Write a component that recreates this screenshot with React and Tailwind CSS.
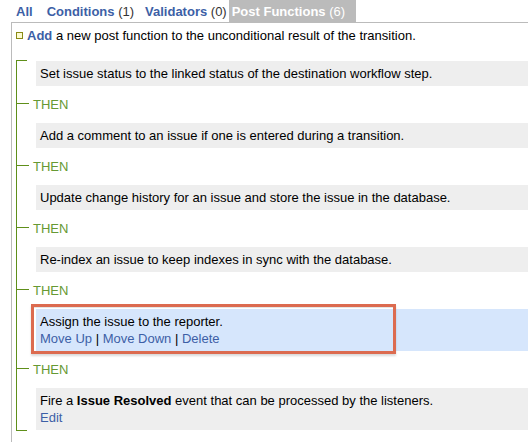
import React from "react";

const G = "bg-[#5f8f1a]";

function Tick() {
  return <div className={`h-px w-[10px] ${G}`} />;
}

function Then() {
  return (
    <div className="flex items-center mt-[9px] mb-[11px] h-[17px]">
      <div className={`h-px w-[12px] ${G}`} />
      <span className="ml-[4px] text-[#669933] leading-[17px] pt-px">THEN</span>
    </div>
  );
}

function Box({ children, blue }) {
  return (
    <div
      className={`ml-[19px] px-[4px] py-[4px] leading-[17px] ${
        blue ? "bg-[#d6e6fc]" : "bg-[#eeeeee]"
      }`}
    >
      {children}
    </div>
  );
}

const link = "text-[#3d5fa6]";

export default function App() {
  return (
    <div
      className="w-[528px] h-[442px] overflow-hidden bg-white text-[13px] text-black"
      style={{ fontFamily: '"Liberation Sans", Arial, sans-serif' }}
    >
      <div className="flex items-end h-[22px] pl-[16px]">
        <span className={`font-bold ${link} leading-[20px] pt-[2px]`}>All</span>
        <span className="ml-[14px] leading-[20px] pt-[2px]">
          <span className={`font-bold ${link}`}>Conditions</span>{" "}
          <span className="text-[#333]">(1)</span>
        </span>
        <span className="ml-[11px] leading-[20px] pt-[2px]">
          <span className={`font-bold ${link}`}>Validators</span>{" "}
          <span className="text-[#333]">(0)</span>
        </span>
        <span className="ml-[2px] pl-[3px] pr-[11px] bg-[#bbbbbb] text-white leading-[20px] pt-[2px]">
          <span className="font-bold">Post Functions</span> (6)
        </span>
      </div>
      <div className="ml-[11px] border-l border-t border-[#bbbbbb] h-[420px]">
        <div className="flex items-center pt-[4px] pl-[4px] leading-[17px]">
          <span className="inline-block w-[7px] h-[7px] border border-[#8a8a16] bg-[#fdfbd0]" />
          <span className="ml-[4px]">
            <span className={`font-bold ${link}`}>Add</span> a new post function to the
            unconditional result of the transition.
          </span>
        </div>
        <div className="ml-[4px] mt-[16px] border-l border-[#5f8f1a]">
          <Tick />
          <Box>Set issue status to the linked status of the destination workflow step.</Box>
          <Then />
          <Box>Add a comment to an issue if one is entered during a transition.</Box>
          <Then />
          <Box>Update change history for an issue and store the issue in the database.</Box>
          <Then />
          <Box>Re-index an issue to keep indexes in sync with the database.</Box>
          <Then />
          <div className="relative">
            <Box blue>
              <div>Assign the issue to the reporter.</div>
              <div>
                <span className={link}>Move Up</span> | <span className={link}>Move Down</span> |{" "}
                <span className={link}>Delete</span>
              </div>
            </Box>
            <div className="absolute left-[14px] top-[-5px] w-[365px] h-[50px] border-[3px] border-[#dc6b50] shadow-[0_2px_2px_rgba(0,0,0,0.15),inset_0_1px_0_rgba(0,0,0,0.1)]" />
          </div>
          <Then />
          <Box>
            <div>
              Fire a <b>Issue Resolved</b> event that can be processed by the listeners.
            </div>
            <div>
              <span className={link}>Edit</span>
            </div>
          </Box>
          <Tick />
        </div>
      </div>
    </div>
  );
}
